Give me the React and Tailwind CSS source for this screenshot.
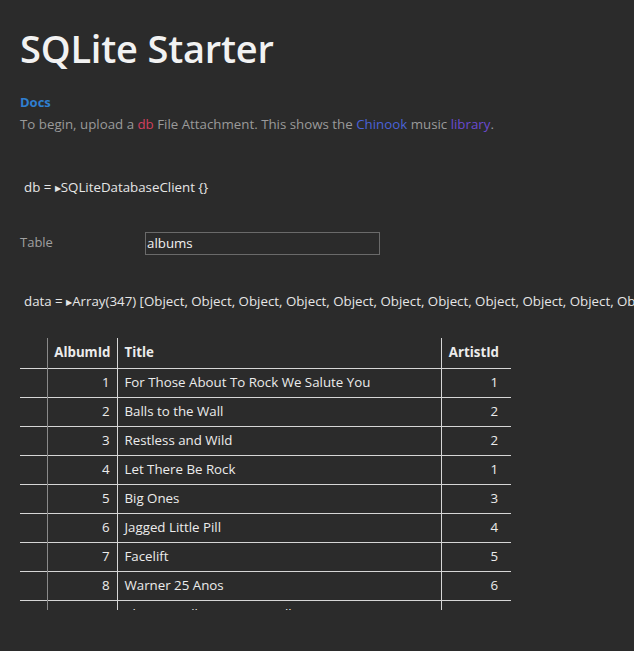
import React from "react";

const rows = [
  [1, "For Those About To Rock We Salute You", 1],
  [2, "Balls to the Wall", 2],
  [3, "Restless and Wild", 2],
  [4, "Let There Be Rock", 1],
  [5, "Big Ones", 3],
  [6, "Jagged Little Pill", 4],
  [7, "Facelift", 5],
  [8, "Warner 25 Anos", 6],
  [9, "Plays Metallica By Four Cellos", 7],
  [10, "Audioslave", 8],
];

export default function App() {
  const objs = Array.from({ length: 14 }, () => "Object").join(", ");
  return (
    <div
      className="min-h-[651px] w-[634px] overflow-hidden bg-[#2b2b2b] text-[#dcdcdc]"
      style={{ fontFamily: '"Open Sans", "Liberation Sans", sans-serif' }}
    >
      <div className="flex flex-col pl-5 pt-[24px]">
        <h1 className="text-[38px] leading-[48px] font-semibold text-[#f2f2f2] tracking-[-0.2px]">
          SQLite Starter
        </h1>
        <div className="mt-[21px] text-[13px] leading-[18px] font-bold text-[#2f7fd0]">Docs</div>
        <div className="mt-[4px] text-[13.3px] leading-[18px] text-[#9a9a9a] whitespace-nowrap">
          To begin, upload a <span className="text-[#d04060]">db</span> File Attachment. This shows the{" "}
          <span className="text-[#4a62d8]">Chinook</span> music <span className="text-[#6a4ad0]">library</span>.
        </div>

        <div className="mt-[45px] pl-1 text-[13.3px] leading-[18px] text-[#e6e6e6] whitespace-nowrap">
          db = <span className="text-[8px] align-[1px]">▶</span>SQLiteDatabaseClient {"{}"}
        </div>

        <div className="mt-[35px] flex items-center">
          <div className="w-[125px] text-[13px] leading-[18px] text-[#a0a0a0] -mt-[4px]">Table</div>
          <div className="flex h-[23px] w-[235px] items-center border border-[#6a6a6a] px-[1px] text-[13.3px] text-[#f0f0f0]">
            albums
          </div>
        </div>

        <div className="mt-[37px] pl-1 text-[13.3px] leading-[18px] text-[#e6e6e6] whitespace-nowrap">
          data = <span className="text-[8px] align-[1px]">▶</span>Array(347) [{objs}, …]
        </div>

        <div className="mt-[27px] h-[272px] w-[491px] overflow-hidden">
          <table className="w-[491px] table-fixed border-collapse text-[13.3px] text-[#ececec]">
            <colgroup>
              <col className="w-[27px]" />
              <col className="w-[70px]" />
              <col className="w-[324px]" />
              <col className="w-[70px]" />
            </colgroup>
            <thead>
              <tr className="h-[30px] border-b border-[#d6d6d6]">
                <th className="border-r border-[#8a8a8a]"></th>
                <th className="border-r border-[#d6d6d6] pr-[6px] text-right font-bold">AlbumId</th>
                <th className="border-r border-[#d6d6d6] pl-[7px] text-left font-bold">Title</th>
                <th className="pr-[12px] text-right font-bold">ArtistId</th>
              </tr>
            </thead>
            <tbody>
              {rows.map(([id, title, artist]) => (
                <tr key={id} className="h-[29px] border-b border-[#d6d6d6]">
                  <td className="border-r border-[#8a8a8a]"></td>
                  <td className="border-r border-[#d6d6d6] pr-[7px] text-right">{id}</td>
                  <td className="border-r border-[#d6d6d6] pl-[7px] text-left whitespace-nowrap">{title}</td>
                  <td className="pr-[13px] text-right">{artist}</td>
                </tr>
              ))}
            </tbody>
          </table>
        </div>
      </div>
    </div>
  );
}
